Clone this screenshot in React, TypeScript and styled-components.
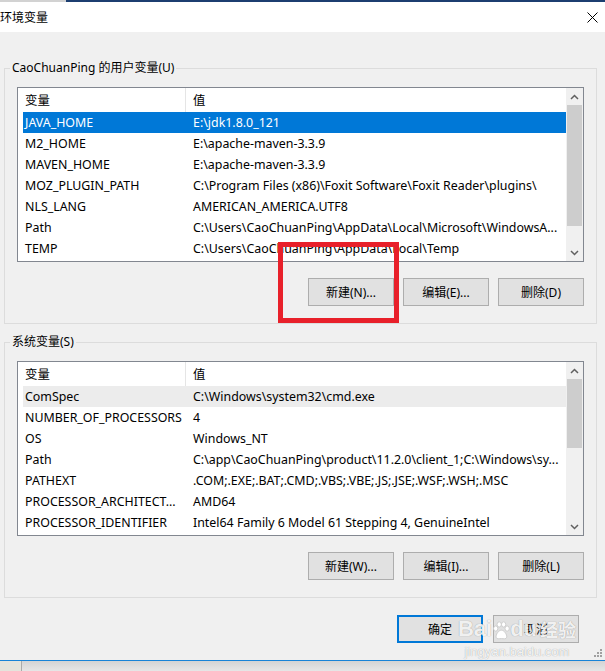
import React from 'react';
import styled, { createGlobalStyle } from 'styled-components';

const UI_FONT = '"Segoe UI", "Noto Sans", "Noto Sans CJK SC", sans-serif';

type RowState = 'normal' | 'selected' | 'hover';

type EnvVar = {
  name: string;
  value: string;
  state?: RowState;
};

const userVars: EnvVar[] = [
  { name: 'JAVA_HOME', value: String.raw`E:\jdk1.8.0_121`, state: 'selected' },
  { name: 'M2_HOME', value: String.raw`E:\apache-maven-3.3.9` },
  { name: 'MAVEN_HOME', value: String.raw`E:\apache-maven-3.3.9` },
  {
    name: 'MOZ_PLUGIN_PATH',
    value: String.raw`C:\Program Files (x86)\Foxit Software\Foxit Reader\plugins\ `.trim(),
  },
  { name: 'NLS_LANG', value: 'AMERICAN_AMERICA.UTF8' },
  {
    name: 'Path',
    value: String.raw`C:\Users\CaoChuanPing\AppData\Local\Microsoft\WindowsA...`,
  },
  { name: 'TEMP', value: String.raw`C:\Users\CaoChuanPing\AppData\Local\Temp` },
];

const systemVars: EnvVar[] = [
  { name: 'ComSpec', value: String.raw`C:\Windows\system32\cmd.exe`, state: 'hover' },
  { name: 'NUMBER_OF_PROCESSORS', value: '4' },
  { name: 'OS', value: 'Windows_NT' },
  {
    name: 'Path',
    value: String.raw`C:\app\CaoChuanPing\product\11.2.0\client_1;C:\Windows\sy...`,
  },
  { name: 'PATHEXT', value: '.COM;.EXE;.BAT;.CMD;.VBS;.VBE;.JS;.JSE;.WSF;.WSH;.MSC' },
  { name: 'PROCESSOR_ARCHITECT...', value: 'AMD64' },
  { name: 'PROCESSOR_IDENTIFIER', value: 'Intel64 Family 6 Model 61 Stepping 4, GenuineIntel' },
];

function Chevron({ up }: { up?: boolean }) {
  return (
    <svg width="9" height="6" viewBox="0 0 9 6">
      <polyline
        points={up ? '1,5 4.5,1.5 8,5' : '1,1 4.5,4.5 8,1'}
        fill="none"
        stroke="#606060"
        strokeWidth="1.5"
      />
    </svg>
  );
}

function VarList({ rows, thumb }: { rows: EnvVar[]; thumb: number }) {
  return (
    <ListBox>
      <ListArea>
        <HeaderRow>
          <HeaderCell $divider>变量</HeaderCell>
          <HeaderCell>值</HeaderCell>
        </HeaderRow>
        {rows.map((row) => (
          <Row key={row.name + row.value} $state={row.state || 'normal'}>
            <NameCell>{row.name}</NameCell>
            <ValueCell>{row.value}</ValueCell>
          </Row>
        ))}
      </ListArea>
      <Scrollbar>
        <ArrowButton>
          <Chevron up />
        </ArrowButton>
        <Track>
          <Thumb style={{ height: thumb }} />
        </Track>
        <ArrowButton>
          <Chevron />
        </ArrowButton>
      </Scrollbar>
    </ListBox>
  );
}

function PawIcon() {
  return (
    <svg width="18" height="22" viewBox="0 0 22 24">
      <g fill="#ffffff" stroke="#c8c8c8" strokeWidth="1">
        <ellipse cx="4.5" cy="9" rx="2.6" ry="3.2" />
        <ellipse cx="8.8" cy="4" rx="2.6" ry="3.2" />
        <ellipse cx="14.2" cy="4" rx="2.6" ry="3.2" />
        <ellipse cx="18.5" cy="9" rx="2.6" ry="3.2" />
        <path d="M11.5 11 C8 11 4.5 16.5 5 19.5 C5.5 22.5 9 21.3 11.5 21.3 C14 21.3 17.5 22.5 18 19.5 C18.5 16.5 15 11 11.5 11 Z" />
      </g>
    </svg>
  );
}

export default function App() {
  return (
    <>
      <GlobalStyle />
      <Window>
        <TopStrip>
          <StripLeft />
          <StripRight />
        </TopStrip>
        <TitleBar>
          <Title>环境变量</Title>
          <CloseIcon width="11" height="11" viewBox="0 0 11 11">
            <path d="M0.5 0.5 L10.5 10.5 M10.5 0.5 L0.5 10.5" stroke="#000" strokeWidth="1" />
          </CloseIcon>
        </TitleBar>
        <Body>
          <Group>
            <Legend>CaoChuanPing 的用户变量(U)</Legend>
            <GroupContent>
              <VarList rows={userVars} thumb={121} />
              <ButtonRow>
                <Button>新建(N)...</Button>
                <Button>编辑(E)...</Button>
                <Button>删除(D)</Button>
              </ButtonRow>
            </GroupContent>
          </Group>
          <Group>
            <Legend>系统变量(S)</Legend>
            <GroupContent>
              <VarList rows={systemVars} thumb={69} />
              <ButtonRow>
                <Button>新建(W)...</Button>
                <Button>编辑(I)...</Button>
                <Button>删除(L)</Button>
              </ButtonRow>
            </GroupContent>
          </Group>
          <DialogButtons>
            <Button $primary>确定</Button>
            <Button>取消</Button>
          </DialogButtons>
          <Grip width="8" height="8" viewBox="0 0 8 8">
            <g fill="#a0a0a0">
              <rect x="6" y="0" width="2" height="2" />
              <rect x="3" y="3" width="2" height="2" />
              <rect x="6" y="3" width="2" height="2" />
              <rect x="0" y="6" width="2" height="2" />
              <rect x="3" y="6" width="2" height="2" />
              <rect x="6" y="6" width="2" height="2" />
            </g>
          </Grip>
        </Body>
        <BottomEdge>
          <BottomLeft />
        </BottomEdge>
        <Highlight />
        <Watermark>
          <Brand>
            <BrandText>Bai</BrandText>
            <PawIcon />
            <BrandText>du</BrandText>
            <BrandCjk>经验</BrandCjk>
          </Brand>
          <BrandUrl>jingyan.baidu.com</BrandUrl>
        </Watermark>
      </Window>
    </>
  );
}

const GlobalStyle = createGlobalStyle`
  html, body {
    margin: 0;
    padding: 0;
  }

  body {
    background: #f0f0f0;
    font-family: ${UI_FONT};
    font-size: 12.4px;
    color: #000;
  }
`;

const Window = styled.div`
  position: relative;
  display: flex;
  flex-direction: column;
  width: 605px;
  height: 671px;
  overflow: hidden;
`;

const TopStrip = styled.div`
  display: flex;
  height: 2px;
`;

const StripLeft = styled.div`
  width: 66px;
  background: #d2d2d2;
`;

const StripRight = styled.div`
  flex: 1;
  background: #1c3e70;
`;

const TitleBar = styled.div`
  display: flex;
  align-items: center;
  justify-content: space-between;
  height: 30px;
  padding-right: 7px;
  background: #fff;
`;

const Title = styled.span`
  font-size: 12px;
  line-height: 16px;
  margin-top: 1px;
`;

const CloseIcon = styled.svg`
  display: block;
  margin-top: 1px;
`;

const Body = styled.div`
  position: relative;
  display: flex;
  flex-direction: column;
  flex: none;
  height: 628px;
  padding-top: 28px;
  box-sizing: border-box;
  background: #f0f0f0;
`;

const Group = styled.fieldset`
  margin: 0 8px 0 4px;
  padding: 0;
  min-width: 0;
  border: 1px solid #dcdcdc;

  & + & {
    margin-top: 10px;
  }
`;

const Legend = styled.legend`
  margin-left: 5px;
  padding: 0 2px;
  font-size: 12px;
  line-height: 16px;
`;

const GroupContent = styled.div`
  padding: 11px 12px 17px;
`;

const ListBox = styled.div`
  display: flex;
  height: 175px;
  box-sizing: border-box;
  border: 1px solid #828790;
  background: #fff;
`;

const ListArea = styled.div`
  display: flex;
  flex-direction: column;
  flex: 1;
  min-width: 0;
  overflow: hidden;
`;

const HeaderRow = styled.div`
  display: flex;
  align-items: center;
  height: 24px;
  flex: none;
`;

const HeaderCell = styled.div<{ $divider?: boolean }>`
  display: flex;
  align-items: center;
  height: 100%;
  padding-left: 7px;
  box-sizing: border-box;
  ${({ $divider }) => ($divider ? 'width: 168px; border-right: 1px solid #e5e5e5;' : 'flex: 1;')}
`;

const rowColors: Record<RowState, { bg: string; fg: string }> = {
  normal: { bg: 'transparent', fg: '#000' },
  selected: { bg: '#0078d7', fg: '#fff' },
  hover: { bg: '#ececec', fg: '#000' },
};

const Row = styled.div<{ $state: RowState }>`
  display: flex;
  align-items: center;
  flex: none;
  height: 21px;
  margin-left: 5px;
  background: ${({ $state }) => rowColors[$state].bg};
  color: ${({ $state }) => rowColors[$state].fg};
  white-space: nowrap;
`;

const NameCell = styled.div`
  width: 163px;
  padding-left: 2px;
  box-sizing: border-box;
  overflow: hidden;
`;

const ValueCell = styled.div`
  flex: 1;
  min-width: 0;
  padding-left: 7px;
  overflow: hidden;
`;

const Scrollbar = styled.div`
  display: flex;
  flex-direction: column;
  width: 17px;
  flex: none;
  background: #f0f0f0;
`;

const ArrowButton = styled.div`
  display: flex;
  align-items: center;
  justify-content: center;
  height: 17px;
  flex: none;
`;

const Track = styled.div`
  flex: 1;
`;

const Thumb = styled.div`
  margin: 0 1px;
  background: #cdcdcd;
`;

const ButtonRow = styled.div`
  display: flex;
  justify-content: flex-end;
  gap: 9px;
  margin-top: 16px;
`;

const Button = styled.button<{ $primary?: boolean }>`
  width: 86px;
  height: 28px;
  padding: 0;
  box-sizing: border-box;
  border: ${({ $primary }) => ($primary ? '2px solid #0078d7' : '1px solid #adadad')};
  background: #e1e1e1;
  font-family: ${UI_FONT};
  font-size: 12px;
  color: #000;
`;

const DialogButtons = styled.div`
  display: flex;
  justify-content: flex-end;
  gap: 10px;
  margin-top: 17px;
  padding-right: 26px;
`;

const Grip = styled.svg`
  position: absolute;
  right: 3px;
  bottom: 3px;
`;

const BottomEdge = styled.div`
  display: flex;
  flex: 1;
  border-top: 1px solid #1883d7;
  background: linear-gradient(#d4d4d4, #e6e6e6);
`;

const BottomLeft = styled.div`
  width: 21px;
  border-right: 1px solid #aaaaaa;
  background: #e4e4dc;
`;

const Highlight = styled.div`
  position: absolute;
  left: 278px;
  top: 242px;
  width: 121px;
  height: 81px;
  box-sizing: border-box;
  border: 5px solid #e8202a;
  pointer-events: none;
`;

const Watermark = styled.div`
  position: absolute;
  left: 457px;
  top: 610px;
  width: 120px;
  display: flex;
  flex-direction: column;
  align-items: center;
  white-space: nowrap;
  pointer-events: none;
`;

const Brand = styled.div`
  display: flex;
  flex-wrap: nowrap;
  align-items: flex-end;
  height: 32px;
`;

const BrandText = styled.span`
  font-family: "Liberation Sans", Arial, sans-serif;
  font-size: 22px;
  font-weight: bold;
  line-height: 26px;
  color: rgba(255, 255, 255, 0.9);
  text-shadow: 0 0 1px rgba(0, 0, 0, 0.4);
`;

const BrandCjk = styled(BrandText)`
  margin-left: 3px;
  font-family: "Noto Sans CJK SC", sans-serif;
  font-size: 18px;
`;

const BrandUrl = styled.span`
  margin-top: 2px;
  font-family: "Liberation Sans", Arial, sans-serif;
  font-size: 13px;
  line-height: 16px;
  color: rgba(255, 255, 255, 0.9);
  text-shadow: 0 0 1px rgba(0, 0, 0, 0.4);
`;
